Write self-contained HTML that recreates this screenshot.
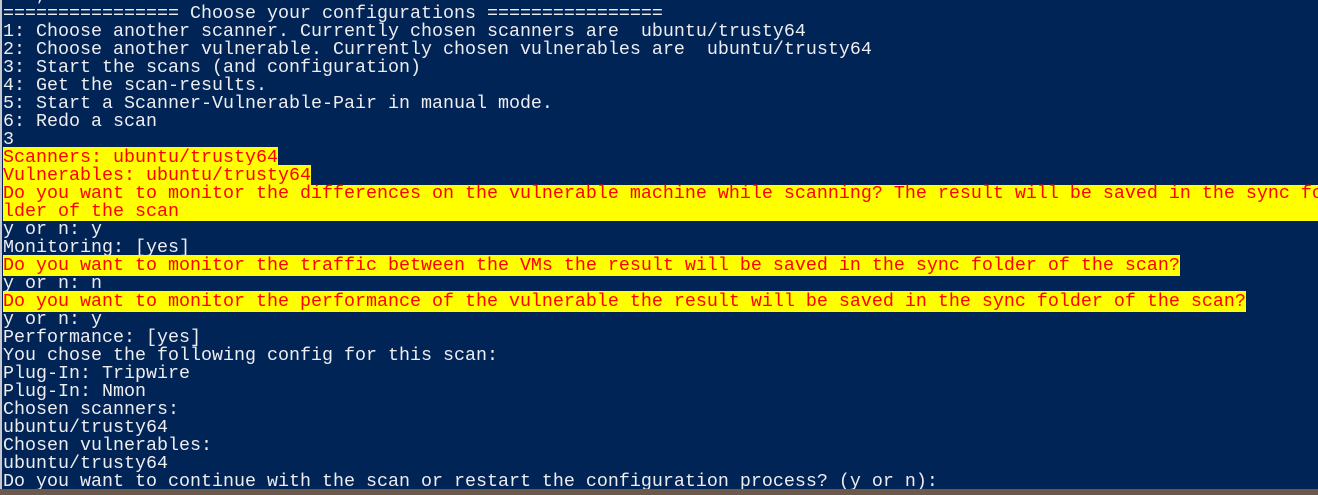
<!DOCTYPE html>
<html><head><meta charset="utf-8"><style>
html,body{margin:0;padding:0;width:1318px;height:495px;overflow:hidden;background:#6b5a4c}
#t{position:absolute;left:0;top:0;width:1318px;height:489px;background:#012456;border-left:2px solid #c8c8d0;box-sizing:border-box;overflow:hidden}
pre{margin:0;position:absolute;left:1px;top:-13px;font-family:"Liberation Mono",monospace;font-size:18.33px;line-height:18px;color:#eeedf0;white-space:pre}
.h{background:#ffff00;color:#ff0000}
.f{display:block;background:#ffff00;color:#ff0000;width:1320px}
</style></head><body>
<div id="t"><pre>   ,
================ Choose your configurations ================
1: Choose another scanner. Currently chosen scanners are  ubuntu/trusty64
2: Choose another vulnerable. Currently chosen vulnerables are  ubuntu/trusty64
3: Start the scans (and configuration)
4: Get the scan-results.
5: Start a Scanner-Vulnerable-Pair in manual mode.
6: Redo a scan
3
<span class="h">Scanners: ubuntu/trusty64</span>
<span class="h">Vulnerables: ubuntu/trusty64</span>
<span class="f">Do you want to monitor the differences on the vulnerable machine while scanning? The result will be saved in the sync fo
lder of the scan</span>y or n: y
Monitoring: [yes]
<span class="h">Do you want to monitor the traffic between the VMs the result will be saved in the sync folder of the scan?</span>
y or n: n
<span class="h">Do you want to monitor the performance of the vulnerable the result will be saved in the sync folder of the scan?</span>
y or n: y
Performance: [yes]
You chose the following config for this scan:
Plug-In: Tripwire
Plug-In: Nmon
Chosen scanners:
ubuntu/trusty64
Chosen vulnerables:
ubuntu/trusty64
Do you want to continue with the scan or restart the configuration process? (y or n):</pre></div>
</body></html>
